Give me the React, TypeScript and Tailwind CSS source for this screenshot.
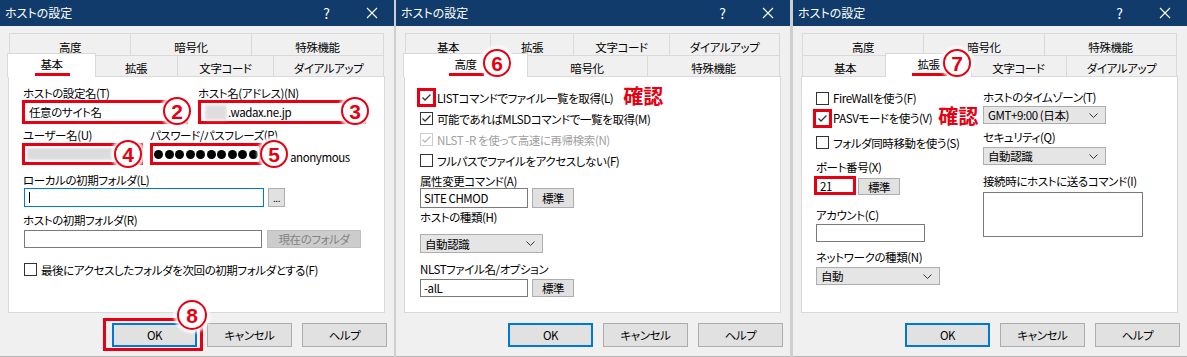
import React from "react";

type Tab = { label: string; w: string; ws?: string };

const basicRow: Tab[] = [
  { label: "基本", w: "w-[85px]", ws: "w-[89px]" },
  { label: "拡張", w: "w-[83px]", ws: "w-[87px]" },
  { label: "文字コード", w: "w-[96px]" },
  { label: "ダイアルアップ", w: "w-[111px]" },
];

const advRow: Tab[] = [
  { label: "高度", w: "w-[121px]", ws: "w-[125px]" },
  { label: "暗号化", w: "w-[121px]" },
  { label: "特殊機能", w: "w-[133px]" },
];

function TabRow({ tabs, sel, top }: { tabs: Tab[]; sel?: number; top?: boolean }) {
  return (
    <div className={top ? "flex h-[22px]" : "flex h-[21px]"}>
      {tabs.map((t, i) =>
        i === sel ? (
          <div
            key={t.label}
            className={`relative z-10 -mx-[2px] -mt-[2px] flex h-[24px] justify-center border-x border-t border-[#d9d9d9] bg-white pt-[3px] ${t.ws}`}
          >
            <span className="relative h-[14px] leading-[14px]">
              {t.label}
              <span className="absolute -left-[5px] -right-[7px] top-[16px] h-[3px] bg-[#e60012]" />
            </span>
          </div>
        ) : (
          <div
            key={t.label}
            className={`flex items-center justify-center border-l border-t border-[#d9d9d9] last:border-r ${top ? "pt-[5px]" : "pt-[3px]"} ${t.w}`}
          >
            {t.label}
          </div>
        ),
      )}
    </div>
  );
}

function TitleBar() {
  return (
    <div className="flex h-[26px] items-center bg-[#103b6a] pl-[5px] text-[12px] tracking-normal text-white">
      <span className="flex-1">ホストの設定</span>
      <span className="flex w-[45px] justify-center text-[14px]">?</span>
      <span className="flex w-[45px] justify-center">
        <svg width="12" height="12" viewBox="0 0 12 12">
          <path d="M1 1L11 11M11 1L1 11" stroke="#ffffff" strokeWidth="1.1" />
        </svg>
      </span>
    </div>
  );
}

function Btn({ className, children, muted }: { className: string; children: React.ReactNode; muted?: boolean }) {
  return (
    <div
      className={`flex items-center justify-center border ${muted ? "border-[#bfbfbf] bg-[#cccccc] text-[#838383]" : "border-[#adadad] bg-[#e1e1e1]"} ${className}`}
    >
      {children}
    </div>
  );
}

function Buttons({ okMark }: { okMark?: boolean }) {
  return (
    <div className="mt-[10px] flex justify-end gap-[10px] pr-[7px]">
      <div className="relative flex h-[24px] w-[85px] items-center justify-center border-2 border-[#0078d7] bg-[#e1e1e1]">
        OK
        {okMark && <div className="absolute -bottom-[6px] -left-[11px] -right-[8px] -top-[7px] border-[3px] border-[#e60012]" />}
      </div>
      <Btn className="h-[24px] w-[85px]">キャンセル</Btn>
      <Btn className="h-[24px] w-[85px]">ヘルプ</Btn>
    </div>
  );
}

function Mark({ n, className }: { n: string; className: string }) {
  return (
    <div
      className={`absolute z-20 flex items-center justify-center rounded-full border-[2.5px] border-[#e60012] bg-white text-[21px] font-bold leading-none tracking-normal text-[#e60012] shadow-[0_0_3px_3px_rgba(255,255,255,0.9)] [font-family:'Liberation_Sans',sans-serif] ${className}`}
    >
      {n}
    </div>
  );
}

function Kakunin({ className }: { className: string }) {
  return (
    <span
      className={`relative shrink-0 whitespace-nowrap text-[20px] font-bold leading-none tracking-normal text-[#e60012] [text-shadow:0_0_2px_#fff,0_0_2px_#fff] ${className}`}
    >
      確認
    </span>
  );
}

function Box({ checked, disabled, red }: { checked?: boolean; disabled?: boolean; red?: boolean }) {
  const tick = checked ? (
    <svg width="11" height="11" viewBox="0 0 11 11">
      <path d="M1.5 5.5L4 8L9.5 2.5" fill="none" stroke={disabled ? "#bcbcbc" : "#333333"} strokeWidth="1.3" />
    </svg>
  ) : null;
  if (red)
    return (
      <div className="-m-[3px] flex h-[19px] w-[19px] shrink-0 items-center justify-center border-[3px] border-[#e60012] bg-white">
        {tick}
      </div>
    );
  return (
    <div
      className={`flex h-[13px] w-[13px] shrink-0 items-center justify-center border bg-white ${disabled ? "border-[#cccccc]" : "border-[#333333]"}`}
    >
      {tick}
    </div>
  );
}

function CheckRow({
  label,
  checked,
  disabled,
  red,
  extra,
  className = "h-[21px]",
}: {
  label: string;
  checked?: boolean;
  disabled?: boolean;
  red?: boolean;
  extra?: React.ReactNode;
  className?: string;
}) {
  return (
    <div className={`flex shrink-0 items-center whitespace-nowrap ${className}`}>
      <Box checked={checked} disabled={disabled} red={red} />
      <span className={`ml-[4px] shrink-0 ${disabled ? "text-[#a0a0a0]" : ""}`}>{label}</span>
      {extra}
    </div>
  );
}

function Select({ value, className }: { value: string; className: string }) {
  return (
    <div className={`flex items-center justify-between border border-[#adadad] bg-[#e5e5e5] pl-[4px] pr-[7px] ${className}`}>
      <span>{value}</span>
      <svg width="9" height="5" viewBox="0 0 9 5">
        <path d="M0.5 0.5L4.5 4.5L8.5 0.5" fill="none" stroke="#333333" strokeWidth="1" />
      </svg>
    </div>
  );
}

function Dialog({
  top,
  bottom,
  sel,
  okMark,
  children,
  overlay,
}: {
  top: Tab[];
  bottom: Tab[];
  sel: number;
  okMark?: boolean;
  children: React.ReactNode;
  overlay?: React.ReactNode;
}) {
  return (
    <div className="relative flex h-[357px] w-[394px] shrink-0 flex-col border-b border-[#b5b5b5] bg-[#f0f0f0]">
      <TitleBar />
      <div className="ml-[9px] mt-[7px] w-[375px]">
        <TabRow tabs={top} top />
        <TabRow tabs={bottom} sel={sel} />
      </div>
      <div className="ml-[8px] h-[237px] w-[377px] border border-[#d9d9d9] bg-white">{children}</div>
      <Buttons okMark={okMark} />
      {overlay}
    </div>
  );
}

const dots = Array.from({ length: 10 });

function BasicDialog() {
  return (
    <Dialog
      top={advRow}
      bottom={basicRow}
      sel={0}
      okMark
      overlay={
        <>
          <Mark n="2" className="left-[163px] top-[97px] h-[28px] w-[28px]" />
          <Mark n="3" className="left-[341px] top-[97px] h-[28px] w-[28px]" />
          <Mark n="4" className="left-[114px] top-[140px] h-[28px] w-[28px]" />
          <Mark n="5" className="left-[260px] top-[140px] h-[28px] w-[28px]" />
          <Mark n="8" className="left-[177px] top-[300px] h-[30px] w-[30px]" />
        </>
      }
    >
      <div className="flex flex-col pl-[14px] pt-[9px]">
        <div className="flex">
          <div className="w-[175px]">
            <div className="h-[14px] leading-[14px]">ホストの設定名(T)</div>
            <div className="-ml-[1px] flex h-[24px] w-[166px] items-center border-[3px] border-[#e60012] bg-white pl-[4px]">
              任意のサイト名
            </div>
          </div>
          <div>
            <div className="h-[14px] leading-[14px]">ホスト名(アドレス)(N)</div>
            <div className="flex h-[24px] w-[168px] items-center border-[3px] border-[#e60012] bg-white pl-[4px]">
              <span className="h-[15px] w-[22px] bg-[#dedede] blur-[1.5px]" />
              <span className="ml-[1px]">.wadax.ne.jp</span>
            </div>
          </div>
        </div>
        <div className="mt-[4px] flex">
          <div className="w-[127px]">
            <div className="h-[15px] leading-[14px]">ユーザー名(U)</div>
            <div className="-ml-[1px] h-[22px] w-[121px] border-[3px] border-[#e60012] bg-white p-[2px]">
              <div className="h-full w-full bg-[#dcdcdc] blur-[1px]" />
            </div>
          </div>
          <div>
            <div className="h-[15px] leading-[14px]">パスワード/パスフレーズ(P)</div>
            <div className="flex items-center">
              <div className="flex h-[22px] w-[112px] items-center gap-[1.5px] border-[3px] border-[#e60012] bg-white pl-[1px]">
                {dots.map((_, i) => (
                  <span key={i} className="h-[9px] w-[9px] rounded-full bg-black" />
                ))}
              </div>
              <span className="ml-[28px] mt-[5px]">anonymous</span>
            </div>
          </div>
        </div>
        <div className="mt-[8px] h-[15px] leading-[14px]">ローカルの初期フォルダ(L)</div>
        <div className="flex">
          <div className="ml-[1px] flex h-[19px] w-[240px] items-center border border-[#0078d7] bg-white pl-[4px]">
            <span className="h-[11px] w-[1px] bg-black" />
          </div>
          <Btn className="ml-[4px] h-[19px] w-[17px] text-[10px]">...</Btn>
        </div>
        <div className="mt-[6px] h-[17px] leading-[14px]">ホストの初期フォルダ(R)</div>
        <div className="flex">
          <div className="ml-[1px] h-[18px] w-[238px] border border-[#7a7a7a] bg-white" />
          <Btn muted className="ml-[5px] h-[18px] w-[94px]">
            現在のフォルダ
          </Btn>
        </div>
        <CheckRow className="ml-[1px] mt-[15px] h-[13px]" label="最後にアクセスしたフォルダを次回の初期フォルダとする(F)" />
      </div>
    </Dialog>
  );
}

function AdvancedDialog() {
  return (
    <Dialog
      top={basicRow}
      bottom={advRow}
      sel={0}
      overlay={<Mark n="6" className="left-[87px] top-[49px] h-[28px] w-[28px]" />}
    >
      <div className="flex flex-col pl-[15px] pt-[10px]">
        <CheckRow red checked label="LISTコマンドでファイル一覧を取得(L)" extra={<Kakunin className="-top-[2px] ml-[10px]" />} />
        <CheckRow checked label="可能であればMLSDコマンドで一覧を取得(M)" />
        <CheckRow checked disabled label="NLST -R を使って高速に再帰検索(N)" />
        <CheckRow label="フルパスでファイルをアクセスしない(F)" />
        <div className="mt-[3px] h-[14px] leading-[14px]">属性変更コマンド(A)</div>
        <div className="flex">
          <div className="flex h-[20px] w-[108px] items-center border border-[#7a7a7a] bg-white pl-[3px]">SITE CHMOD</div>
          <Btn className="ml-[4px] h-[20px] w-[42px]">標準</Btn>
        </div>
        <div className="mt-[2px] h-[24px] leading-[14px]">ホストの種類(H)</div>
        <Select value="自動認識" className="h-[19px] w-[123px]" />
        <div className="mt-[9px] h-[17px] leading-[14px]">NLSTファイル名/オプション</div>
        <div className="flex">
          <div className="flex h-[18px] w-[108px] items-center border border-[#7a7a7a] bg-white pl-[3px]">-alL</div>
          <Btn className="ml-[4px] h-[18px] w-[42px]">標準</Btn>
        </div>
      </div>
    </Dialog>
  );
}

function ExtendedDialog() {
  return (
    <Dialog
      top={advRow}
      bottom={basicRow}
      sel={1}
      overlay={<Mark n="7" className="left-[150px] top-[49px] h-[28px] w-[28px]" />}
    >
      <div className="flex pl-[14px] pt-[11px]">
        <div className="flex w-[167px] shrink-0 flex-col">
          <CheckRow className="h-[20px]" label="FireWallを使う(F)" />
          <CheckRow className="h-[20px]" red checked label="PASVモードを使う(V)" extra={<Kakunin className="-top-[2px] ml-[6px]" />} />
          <CheckRow className="mt-[4px] h-[21px]" label="フォルダ同時移動を使う(S)" />
          <div className="mt-[7px] h-[16px] leading-[14px]">ポート番号(X)</div>
          <div className="flex h-[19px] items-end">
            <div className="-ml-[2px] flex h-[19px] w-[42px] items-center border-[3px] border-[#e60012] bg-white pl-[3px]">21</div>
            <Btn className="ml-[2px] h-[17px] w-[42px]">標準</Btn>
          </div>
          <div className="mt-[13px] h-[16px] leading-[14px]">アカウント(C)</div>
          <div className="h-[18px] w-[109px] border border-[#7a7a7a] bg-white" />
          <div className="mt-[8px] h-[17px] leading-[14px]">ネットワークの種類(N)</div>
          <Select value="自動" className="h-[18px] w-[124px]" />
        </div>
        <div className="flex flex-col pt-[2px]">
          <div className="h-[16px] leading-[14px]">ホストのタイムゾーン(T)</div>
          <Select value="GMT+9:00 (日本)" className="h-[18px] w-[123px]" />
          <div className="mt-[6px] h-[17px] leading-[14px]">セキュリティ(Q)</div>
          <Select value="自動認識" className="h-[18px] w-[123px]" />
          <div className="mt-[9px] h-[18px] leading-[14px]">接続時にホストに送るコマンド(I)</div>
          <div className="h-[45px] w-[160px] border border-[#7a7a7a] bg-white" />
        </div>
      </div>
    </Dialog>
  );
}

export default function App() {
  return (
    <div className="flex h-[357px] w-[1187px] overflow-hidden bg-[#d0d0d0] text-[11.5px] leading-[16px] tracking-[-0.4px] text-black [font-family:'Noto_Sans_CJK_JP',sans-serif] [font-feature-settings:'palt']">
      <BasicDialog />
      <div className="w-[2px] shrink-0 bg-[#cfcfcf]" />
      <AdvancedDialog />
      <div className="w-[3px] shrink-0 bg-[#cfcfcf]" />
      <ExtendedDialog />
    </div>
  );
}
